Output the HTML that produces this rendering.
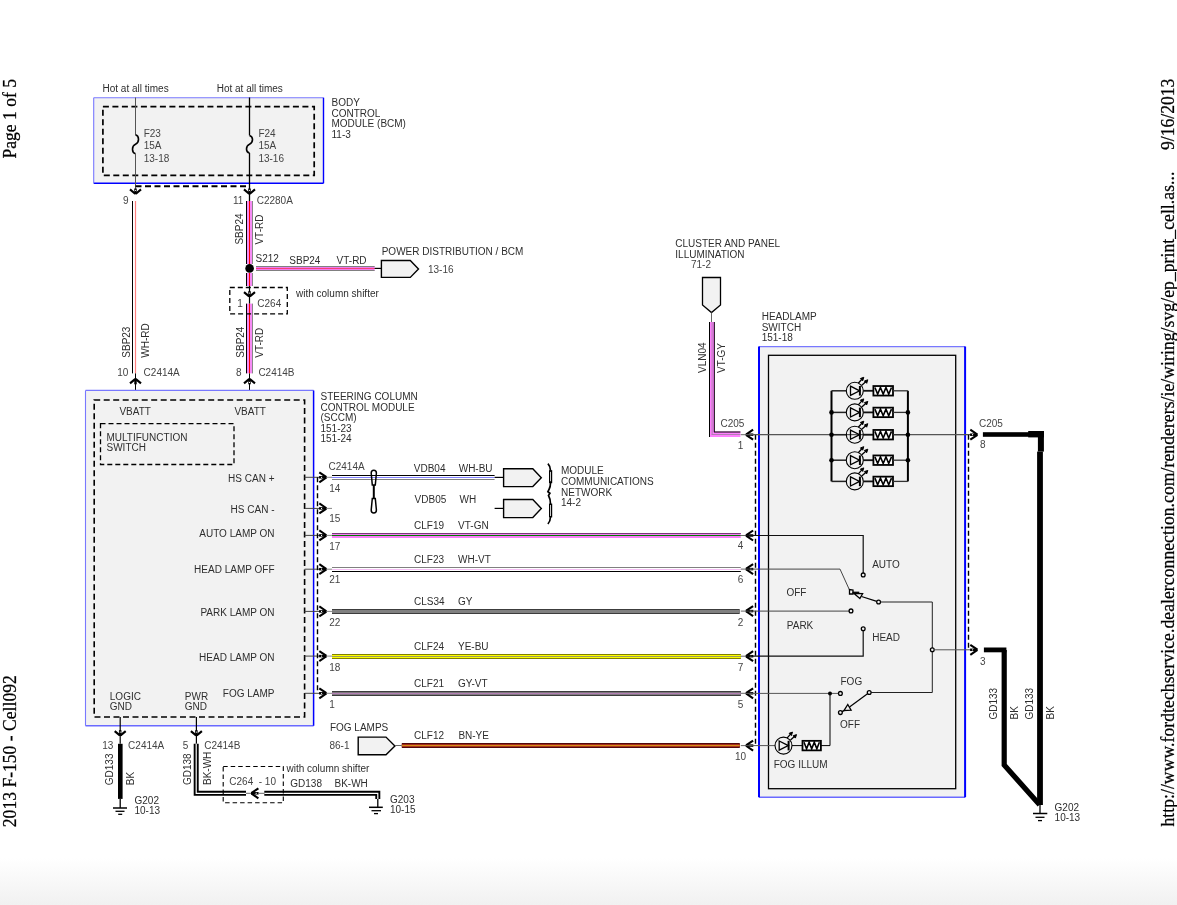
<!DOCTYPE html>
<html><head><meta charset="utf-8"><style>
html,body{margin:0;padding:0;background:#fff;width:1177px;height:905px;overflow:hidden}
svg{display:block;will-change:transform}

</style></head><body>
<svg width="1177" height="905" viewBox="0 0 1177 905">
<defs><linearGradient id="bg" x1="0" y1="0" x2="0" y2="1"><stop offset="0" stop-color="#ffffff"/><stop offset="1" stop-color="#f1f1f1"/></linearGradient></defs>
<rect x="0" y="858" width="1177" height="47" fill="url(#bg)" stroke="none" stroke-width="1"/>
<g font-family="'Liberation Serif', serif" font-size="17.6" fill="#000" stroke="#000" stroke-width="0.25">
<text transform="translate(16.1,158.6) rotate(-90) scale(1,1.07)">Page 1 of 5</text>
<text transform="translate(16.1,827.2) rotate(-90) scale(1,1.07)">2013 F-150 - Cell092</text>
<text transform="translate(1173.6,150) rotate(-90) scale(1,1.07)">9/16/2013</text>
<text transform="translate(1173.6,826.6) rotate(-90) scale(1,1.07)" textLength="655">http://www.fordtechservice.dealerconnection.com/renderers/ie/wiring/svg/ep_print_cell.as...</text>
</g>
<g font-family="'Liberation Sans', sans-serif" font-size="10">
<rect x="93.7" y="97.7" width="229.8" height="85.6" fill="#f2f2f2" stroke="none" stroke-width="1"/>
<line x1="93.7" y1="97.7" x2="323.5" y2="97.7" stroke="#7878ff" stroke-width="1.1"/>
<line x1="93.7" y1="183.3" x2="323.5" y2="183.3" stroke="#0000ff" stroke-width="1.4"/>
<line x1="93.7" y1="97.7" x2="93.7" y2="183.3" stroke="#7878ff" stroke-width="1.1"/>
<line x1="323.5" y1="97.7" x2="323.5" y2="183.3" stroke="#0000ff" stroke-width="1.4"/>
<rect x="102.9" y="106.6" width="211.3" height="68.8" fill="none" stroke="#000" stroke-width="1.7" stroke-dasharray="6 3.5"/>
<text x="102.5" y="92" fill="#2e2e2e">Hot at all times</text>
<text x="216.7" y="92" fill="#2e2e2e">Hot at all times</text>
<line x1="135.5" y1="97.5" x2="135.5" y2="134.8" stroke="#555" stroke-width="1"/>
<path d="M135.5,134.8 C139.5,136 139.5,142.5 135.5,144.3 C131.5,146 131.5,152.5 135.5,153.8" fill="none" stroke="#000" stroke-width="1.6"/>
<line x1="135.5" y1="153.8" x2="135.5" y2="194" stroke="#555" stroke-width="1"/>
<line x1="249.5" y1="97.5" x2="249.5" y2="135.4" stroke="#000" stroke-width="1.3"/>
<path d="M249.5,135.4 C253.5,136.5 253.5,142.5 249.5,144.2 C245.5,146 245.5,152 249.5,153" fill="none" stroke="#000" stroke-width="1.6"/>
<line x1="249.5" y1="153" x2="249.5" y2="201" stroke="#000" stroke-width="1.3"/>
<text x="143.7" y="136.9" fill="#444">F23</text>
<text x="143.7" y="149.25" fill="#444">15A</text>
<text x="143.7" y="161.6" fill="#444">13-18</text>
<text x="258.4" y="136.9" fill="#444">F24</text>
<text x="258.4" y="149.25" fill="#444">15A</text>
<text x="258.4" y="161.6" fill="#444">13-16</text>
<text x="331.5" y="106.3" fill="#2e2e2e">BODY</text>
<text x="331.5" y="116.8" fill="#2e2e2e">CONTROL</text>
<text x="331.5" y="127.3" fill="#2e2e2e">MODULE (BCM)</text>
<text x="331.5" y="137.8" fill="#2e2e2e">11-3</text>
<line x1="135.5" y1="186.2" x2="249.5" y2="186.2" stroke="#000" stroke-width="2" stroke-dasharray="6 3.5"/>
<path d="M141.0,189.4 L135.9,193.7 M130.0,189.4 L135.1,193.7" fill="none" stroke="#000" stroke-width="2.1"/>
<path d="M135.5,194.3 L135.5,188.5" fill="none" stroke="#000" stroke-width="2.5"/>
<circle cx="135.5" cy="190.36" r="0.6" fill="#fff"/>
<path d="M255.0,189.4 L249.9,193.7 M244.0,189.4 L249.1,193.7" fill="none" stroke="#000" stroke-width="2.1"/>
<path d="M249.5,194.3 L249.5,188.5" fill="none" stroke="#000" stroke-width="2.5"/>
<circle cx="249.5" cy="190.36" r="0.6" fill="#fff"/>
<text x="123" y="204" fill="#444">9</text>
<text x="233" y="204" fill="#444">11</text>
<text x="256.7" y="204" fill="#444">C2280A</text>
<line x1="132.5" y1="201" x2="132.5" y2="373.4" stroke="#000" stroke-width="1"/>
<line x1="135.5" y1="201" x2="135.5" y2="373.4" stroke="#ff8080" stroke-width="1.2"/>
<text transform="translate(129.5,357.7) rotate(-90)" fill="#2e2e2e">SBP23</text>
<text transform="translate(148.9,357.7) rotate(-90)" fill="#2e2e2e">WH-RD</text>
<text x="117.3" y="375.5" fill="#444">10</text>
<text x="143.6" y="375.5" fill="#444">C2414A</text>
<path d="M130.0,383.4 L135.1,379.1 M141.0,383.4 L135.9,379.1" fill="none" stroke="#000" stroke-width="2.1"/>
<path d="M135.5,378.5 L135.5,384.3" fill="none" stroke="#000" stroke-width="2.5"/>
<circle cx="135.5" cy="382.44" r="0.6" fill="#fff"/>
<line x1="135.5" y1="373.4" x2="135.5" y2="400" stroke="#000" stroke-width="1"/>
<rect x="246" y="201" width="1" height="63" fill="#000" stroke="none" stroke-width="1"/>
<rect x="247" y="201" width="2" height="63" fill="#f58cf5" stroke="none" stroke-width="1"/>
<rect x="249" y="201" width="1" height="63" fill="#ff0000" stroke="none" stroke-width="1"/>
<rect x="250" y="201" width="2" height="63" fill="#f58cf5" stroke="none" stroke-width="1"/>
<rect x="252" y="201" width="1" height="63" fill="#888" stroke="none" stroke-width="1"/>
<rect x="246" y="273" width="1" height="13" fill="#000" stroke="none" stroke-width="1"/>
<rect x="247" y="273" width="2" height="13" fill="#f58cf5" stroke="none" stroke-width="1"/>
<rect x="249" y="273" width="1" height="13" fill="#ff0000" stroke="none" stroke-width="1"/>
<rect x="250" y="273" width="2" height="13" fill="#f58cf5" stroke="none" stroke-width="1"/>
<rect x="252" y="273" width="1" height="13" fill="#888" stroke="none" stroke-width="1"/>
<rect x="246" y="303.6" width="1" height="69.8" fill="#000" stroke="none" stroke-width="1"/>
<rect x="247" y="303.6" width="2" height="69.8" fill="#f58cf5" stroke="none" stroke-width="1"/>
<rect x="249" y="303.6" width="1" height="69.8" fill="#ff0000" stroke="none" stroke-width="1"/>
<rect x="250" y="303.6" width="2" height="69.8" fill="#f58cf5" stroke="none" stroke-width="1"/>
<rect x="252" y="303.6" width="1" height="69.8" fill="#888" stroke="none" stroke-width="1"/>
<circle cx="249.6" cy="268.4" r="4.3" fill="#000"/>
<text transform="translate(242.6,244.6) rotate(-90)" fill="#2e2e2e">SBP24</text>
<text transform="translate(263.4,244.6) rotate(-90)" fill="#2e2e2e">VT-RD</text>
<text x="255.5" y="262.3" fill="#2e2e2e">S212</text>
<rect x="256" y="266" width="118.6" height="5" fill="#f07cf0" stroke="none" stroke-width="1"/>
<rect x="256" y="266" width="118.6" height="1" fill="#808080" stroke="none" stroke-width="1"/>
<rect x="256" y="268" width="118.6" height="1" fill="#f84078" stroke="none" stroke-width="1"/>
<rect x="256" y="270" width="118.6" height="1" fill="#808080" stroke="none" stroke-width="1"/>
<text x="289.3" y="264" fill="#2e2e2e">SBP24</text>
<text x="336.6" y="264" fill="#2e2e2e">VT-RD</text>
<line x1="374.6" y1="268.4" x2="381.4" y2="268.4" stroke="#000" stroke-width="1.2"/>
<path d="M381.4,260.5 L410.3,260.5 L418.5,268.95 L410.3,277.4 L381.4,277.4 Z" fill="#f2f2f2" stroke="#000" stroke-width="1.4"/>
<text x="381.7" y="254.7" fill="#2e2e2e">POWER DISTRIBUTION / BCM</text>
<text x="428" y="272.6" fill="#444">13-16</text>
<rect x="229.8" y="287.5" width="57.5" height="26.3" fill="none" stroke="#000" stroke-width="1.3" stroke-dasharray="5 3"/>
<line x1="249.5" y1="286" x2="249.5" y2="303.6" stroke="#000" stroke-width="1.2"/>
<path d="M255.0,292.1 L249.9,296.4 M244.0,292.1 L249.1,296.4" fill="none" stroke="#000" stroke-width="2.1"/>
<path d="M249.5,297 L249.5,291.2" fill="none" stroke="#000" stroke-width="2.5"/>
<circle cx="249.5" cy="293.06" r="0.6" fill="#fff"/>
<text x="237.3" y="307.3" fill="#444">1</text>
<text x="257.3" y="307.3" fill="#444">C264</text>
<text x="296" y="296.7" fill="#2e2e2e">with column shifter</text>
<text transform="translate(243.6,357.7) rotate(-90)" fill="#2e2e2e">SBP24</text>
<text transform="translate(263,357.7) rotate(-90)" fill="#2e2e2e">VT-RD</text>
<text x="236" y="375.5" fill="#444">8</text>
<text x="258.4" y="375.5" fill="#444">C2414B</text>
<line x1="249.5" y1="373.4" x2="249.5" y2="400" stroke="#000" stroke-width="1"/>
<path d="M244.0,383.4 L249.1,379.1 M255.0,383.4 L249.9,379.1" fill="none" stroke="#000" stroke-width="2.1"/>
<path d="M249.5,378.5 L249.5,384.3" fill="none" stroke="#000" stroke-width="2.5"/>
<circle cx="249.5" cy="382.44" r="0.6" fill="#fff"/>
<rect x="85.5" y="390.4" width="228.1" height="335.4" fill="#f2f2f2" stroke="none" stroke-width="1"/>
<line x1="85.5" y1="390.4" x2="313.6" y2="390.4" stroke="#7878ff" stroke-width="1.1"/>
<line x1="85.5" y1="725.8" x2="313.6" y2="725.8" stroke="#6a6aff" stroke-width="1.5"/>
<line x1="85.5" y1="390.4" x2="85.5" y2="725.8" stroke="#7878ff" stroke-width="1.1"/>
<line x1="313.6" y1="390.4" x2="313.6" y2="725.8" stroke="#0000ff" stroke-width="1.5"/>
<rect x="94.2" y="400" width="210.4" height="317" fill="none" stroke="#000" stroke-width="1.6" stroke-dasharray="6 3.5"/>
<text x="119.4" y="414.8" fill="#2e2e2e">VBATT</text>
<text x="234.4" y="414.8" fill="#2e2e2e">VBATT</text>
<rect x="100.5" y="423.7" width="133.5" height="40.8" fill="none" stroke="#000" stroke-width="1.3" stroke-dasharray="5 3"/>
<text x="106.5" y="440.7" fill="#2e2e2e">MULTIFUNCTION</text>
<text x="106.5" y="451.3" fill="#2e2e2e">SWITCH</text>
<text x="274.5" y="481.8" text-anchor="end" fill="#2e2e2e">HS CAN +</text>
<text x="274.5" y="512.5" text-anchor="end" fill="#2e2e2e">HS CAN -</text>
<text x="274.5" y="537" text-anchor="end" fill="#2e2e2e">AUTO LAMP ON</text>
<text x="274.5" y="572.7" text-anchor="end" fill="#2e2e2e">HEAD LAMP OFF</text>
<text x="274.5" y="615.5" text-anchor="end" fill="#2e2e2e">PARK LAMP ON</text>
<text x="274.5" y="660.6" text-anchor="end" fill="#2e2e2e">HEAD LAMP ON</text>
<text x="274.5" y="697.3" text-anchor="end" fill="#2e2e2e">FOG LAMP</text>
<text x="109.8" y="699.6" fill="#2e2e2e">LOGIC</text>
<text x="109.8" y="710.2" fill="#2e2e2e">GND</text>
<text x="184.8" y="699.6" fill="#2e2e2e">PWR</text>
<text x="184.8" y="710.2" fill="#2e2e2e">GND</text>
<text x="320.5" y="400.2" fill="#2e2e2e">STEERING COLUMN</text>
<text x="320.5" y="410.7" fill="#2e2e2e">CONTROL MODULE</text>
<text x="320.5" y="421.2" fill="#2e2e2e">(SCCM)</text>
<text x="320.5" y="431.7" fill="#2e2e2e">151-23</text>
<text x="320.5" y="442.2" fill="#2e2e2e">151-24</text>
<line x1="304.6" y1="477.3" x2="326" y2="477.3" stroke="#444" stroke-width="1"/>
<path d="M319.3,472.3 L326.1,476.9 M319.3,482.3 L326.1,477.7" fill="none" stroke="#000" stroke-width="2.1"/>
<path d="M326.7,477.3 L319.1,477.3" fill="none" stroke="#000" stroke-width="2.5"/>
<circle cx="321.53" cy="477.3" r="0.6" fill="#fff"/>
<line x1="326.7" y1="477.3" x2="332" y2="477.3" stroke="#888" stroke-width="1"/>
<text x="329.3" y="491.6" fill="#444">14</text>
<line x1="304.6" y1="508.4" x2="326" y2="508.4" stroke="#444" stroke-width="1"/>
<path d="M319.3,503.4 L326.1,508.0 M319.3,513.4 L326.1,508.8" fill="none" stroke="#000" stroke-width="2.1"/>
<path d="M326.7,508.4 L319.1,508.4" fill="none" stroke="#000" stroke-width="2.5"/>
<circle cx="321.53" cy="508.4" r="0.6" fill="#fff"/>
<line x1="326.7" y1="508.4" x2="332" y2="508.4" stroke="#888" stroke-width="1"/>
<text x="329.3" y="522" fill="#444">15</text>
<line x1="304.6" y1="535.4" x2="326" y2="535.4" stroke="#444" stroke-width="1"/>
<path d="M319.3,530.4 L326.1,535.0 M319.3,540.4 L326.1,535.8" fill="none" stroke="#000" stroke-width="2.1"/>
<path d="M326.7,535.4 L319.1,535.4" fill="none" stroke="#000" stroke-width="2.5"/>
<circle cx="321.53" cy="535.4" r="0.6" fill="#fff"/>
<line x1="326.7" y1="535.4" x2="332" y2="535.4" stroke="#888" stroke-width="1"/>
<text x="329.3" y="550" fill="#444">17</text>
<line x1="304.6" y1="569.2" x2="326" y2="569.2" stroke="#444" stroke-width="1"/>
<path d="M319.3,564.2 L326.1,568.8 M319.3,574.2 L326.1,569.6" fill="none" stroke="#000" stroke-width="2.1"/>
<path d="M326.7,569.2 L319.1,569.2" fill="none" stroke="#000" stroke-width="2.5"/>
<circle cx="321.53" cy="569.2" r="0.6" fill="#fff"/>
<line x1="326.7" y1="569.2" x2="332" y2="569.2" stroke="#888" stroke-width="1"/>
<text x="329.3" y="583.3" fill="#444">21</text>
<line x1="304.6" y1="611.4" x2="326" y2="611.4" stroke="#444" stroke-width="1"/>
<path d="M319.3,606.4 L326.1,611.0 M319.3,616.4 L326.1,611.8" fill="none" stroke="#000" stroke-width="2.1"/>
<path d="M326.7,611.4 L319.1,611.4" fill="none" stroke="#000" stroke-width="2.5"/>
<circle cx="321.53" cy="611.4" r="0.6" fill="#fff"/>
<line x1="326.7" y1="611.4" x2="332" y2="611.4" stroke="#888" stroke-width="1"/>
<text x="329.3" y="626" fill="#444">22</text>
<line x1="304.6" y1="656.1" x2="326" y2="656.1" stroke="#444" stroke-width="1"/>
<path d="M319.3,651.1 L326.1,655.7 M319.3,661.1 L326.1,656.5" fill="none" stroke="#000" stroke-width="2.1"/>
<path d="M326.7,656.1 L319.1,656.1" fill="none" stroke="#000" stroke-width="2.5"/>
<circle cx="321.53" cy="656.1" r="0.6" fill="#fff"/>
<line x1="326.7" y1="656.1" x2="332" y2="656.1" stroke="#888" stroke-width="1"/>
<text x="329.3" y="671.3" fill="#444">18</text>
<line x1="304.6" y1="693.3" x2="326" y2="693.3" stroke="#444" stroke-width="1"/>
<path d="M319.3,688.3 L326.1,692.9 M319.3,698.3 L326.1,693.7" fill="none" stroke="#000" stroke-width="2.1"/>
<path d="M326.7,693.3 L319.1,693.3" fill="none" stroke="#000" stroke-width="2.5"/>
<circle cx="321.53" cy="693.3" r="0.6" fill="#fff"/>
<line x1="326.7" y1="693.3" x2="332" y2="693.3" stroke="#888" stroke-width="1"/>
<text x="329.3" y="707.7" fill="#444">1</text>
<line x1="317.5" y1="477.3" x2="317.5" y2="693.3" stroke="#000" stroke-width="1.4" stroke-dasharray="5 3"/>
<text x="328.5" y="470" fill="#444">C2414A</text>
<rect x="332" y="475" width="162.6" height="1" fill="#000" stroke="none" stroke-width="1"/>
<rect x="332" y="477" width="162.6" height="1" fill="#8080ff" stroke="none" stroke-width="1"/>
<rect x="332" y="479" width="162.6" height="1" fill="#808080" stroke="none" stroke-width="1"/>
<line x1="494.6" y1="477.4" x2="503.6" y2="477.4" stroke="#000" stroke-width="1.2"/>
<line x1="494.6" y1="508.4" x2="503.6" y2="508.4" stroke="#000" stroke-width="1.2"/>
<path d="M503.6,468.7 L532.8,468.7 L541.3,477.65 L532.8,486.6 L503.6,486.6 Z" fill="#f2f2f2" stroke="#000" stroke-width="1.4"/>
<path d="M503.6,499.5 L532.8,499.5 L541.3,508.55 L532.8,517.6 L503.6,517.6 Z" fill="#f2f2f2" stroke="#000" stroke-width="1.4"/>
<text x="413.8" y="471.5" fill="#2e2e2e">VDB04</text>
<text x="458.7" y="471.5" fill="#2e2e2e">WH-BU</text>
<text x="414.6" y="502.8" fill="#2e2e2e">VDB05</text>
<text x="459.5" y="502.8" fill="#2e2e2e">WH</text>
<path d="M373.8,485 L373.8,498.5" fill="none" stroke="#000" stroke-width="2"/>
<path d="M371.2,473 Q371.2,470.2 373.8,470.2 Q376.4,470.2 376.4,473 L375.3,485 L372.3,485 Z" fill="none" stroke="#000" stroke-width="1.5"/>
<path d="M372.3,498.5 L375.3,498.5 L376.4,510 Q376.4,513 373.8,513 Q371.2,513 371.2,510 Z" fill="none" stroke="#000" stroke-width="1.5"/>
<path d="M547.9,463.6 Q550.3,466 550.5,470.5 L550.5,483 Q550.5,487 549,489.5 L547.9,491.8 L549.9,493.2 L548.5,495.5 Q550.5,499 550.5,504 L550.5,517 Q550.3,521.5 547.9,524" fill="none" stroke="#000" stroke-width="1.7"/>
<rect x="549.6" y="470.8" width="2" height="11.8" fill="#fff" stroke="#000" stroke-width="1.2"/>
<rect x="549.6" y="504.2" width="2" height="12.6" fill="#fff" stroke="#000" stroke-width="1.2"/>
<text x="561" y="474.4" fill="#2e2e2e">MODULE</text>
<text x="561" y="484.95" fill="#2e2e2e">COMMUNICATIONS</text>
<text x="561" y="495.5" fill="#2e2e2e">NETWORK</text>
<text x="561" y="506.05" fill="#2e2e2e">14-2</text>
<rect x="332" y="533" width="408.8" height="5" fill="#f880f8" stroke="none" stroke-width="1"/>
<rect x="332" y="533" width="408.8" height="1" fill="#783c78" stroke="none" stroke-width="1"/>
<rect x="332" y="535" width="408.8" height="1" fill="#008000" stroke="none" stroke-width="1"/>
<text x="414" y="529.3" fill="#2e2e2e">CLF19</text>
<text x="458.1" y="529.3" fill="#2e2e2e">VT-GN</text>
<rect x="332" y="567" width="408.8" height="1" fill="#808080" stroke="none" stroke-width="1"/>
<rect x="332" y="569" width="408.8" height="1" fill="#f5c0f5" stroke="none" stroke-width="1"/>
<rect x="332" y="571" width="408.8" height="1" fill="#000" stroke="none" stroke-width="1"/>
<text x="414" y="563.1" fill="#2e2e2e">CLF23</text>
<text x="458.1" y="563.1" fill="#2e2e2e">WH-VT</text>
<rect x="332" y="609" width="407.7" height="5" fill="#3c3c3c" stroke="none" stroke-width="1"/>
<rect x="332" y="610" width="407.7" height="3" fill="#808080" stroke="none" stroke-width="1"/>
<text x="414" y="605" fill="#2e2e2e">CLS34</text>
<text x="458" y="605" fill="#2e2e2e">GY</text>
<rect x="332" y="654" width="408.9" height="5" fill="#808000" stroke="none" stroke-width="1"/>
<rect x="332" y="655" width="408.9" height="3" fill="#ffff00" stroke="none" stroke-width="1"/>
<rect x="332" y="656.1" width="408.9" height="0.8" fill="#808080" stroke="none" stroke-width="1"/>
<text x="414" y="650" fill="#2e2e2e">CLF24</text>
<text x="458" y="650" fill="#2e2e2e">YE-BU</text>
<rect x="332" y="691" width="408.9" height="5" fill="#3c3c3c" stroke="none" stroke-width="1"/>
<rect x="332" y="692" width="408.9" height="3" fill="#787878" stroke="none" stroke-width="1"/>
<rect x="332" y="692.9" width="408.9" height="1.3" fill="#b480b4" stroke="none" stroke-width="1"/>
<text x="414" y="686.9" fill="#2e2e2e">CLF21</text>
<text x="458" y="686.9" fill="#2e2e2e">GY-VT</text>
<rect x="401.8" y="743" width="338.0" height="5" fill="#500a0a" stroke="none" stroke-width="1"/>
<rect x="401.8" y="744" width="338.0" height="3" fill="#a01e1e" stroke="none" stroke-width="1"/>
<rect x="401.8" y="744.9" width="338.0" height="1.3" fill="#d49018" stroke="none" stroke-width="1"/>
<text x="414" y="738.8" fill="#2e2e2e">CLF12</text>
<text x="458.4" y="738.8" fill="#2e2e2e">BN-YE</text>
<text x="329.9" y="730.6" fill="#2e2e2e">FOG LAMPS</text>
<text x="329.5" y="748.5" fill="#444">86-1</text>
<path d="M358.2,737.1 L386,737.1 L394.9,745.9000000000001 L386,754.7 L358.2,754.7 Z" fill="#f2f2f2" stroke="#000" stroke-width="1.4"/>
<line x1="394.9" y1="745.5" x2="401.8" y2="745.5" stroke="#666" stroke-width="1"/>
<text x="675.3" y="246.5" fill="#2e2e2e">CLUSTER AND PANEL</text>
<text x="675.3" y="257.5" fill="#2e2e2e">ILLUMINATION</text>
<text x="691" y="267.6" fill="#444">71-2</text>
<path d="M702.5,277.5 L720.5,277.5 L720.5,305 L711.5,312.6 L702.5,305 Z" fill="#f2f2f2" stroke="#000" stroke-width="1.3"/>
<line x1="711.5" y1="312.6" x2="711.5" y2="322" stroke="#666" stroke-width="1"/>
<rect x="709" y="322" width="5.5" height="115" fill="#ff80ff" stroke="none" stroke-width="1"/>
<rect x="709" y="431.5" width="31.4" height="5.5" fill="#ff80ff" stroke="none" stroke-width="1"/>
<rect x="711.6" y="322" width="1" height="112.8" fill="#b080b0" stroke="none" stroke-width="1"/>
<rect x="711.6" y="434" width="28.8" height="1" fill="#b080b0" stroke="none" stroke-width="1"/>
<line x1="709.5" y1="322" x2="709.5" y2="437" stroke="#000" stroke-width="1"/>
<line x1="714.3" y1="322" x2="714.3" y2="432.3" stroke="#000" stroke-width="1"/>
<line x1="714.3" y1="432" x2="740.4" y2="432" stroke="#000" stroke-width="1"/>
<text transform="translate(705.6,373) rotate(-90)" fill="#2e2e2e">VLN04</text>
<text transform="translate(725.4,373) rotate(-90)" fill="#2e2e2e">VT-GY</text>
<text x="720.5" y="427" fill="#444">C205</text>
<text x="761.7" y="320.3" fill="#2e2e2e">HEADLAMP</text>
<text x="761.7" y="330.7" fill="#2e2e2e">SWITCH</text>
<text x="761.7" y="341.1" fill="#2e2e2e">151-18</text>
<rect x="759" y="346.6" width="206.1" height="450.6" fill="#f2f2f2" stroke="none" stroke-width="1"/>
<line x1="759" y1="346.6" x2="965.1" y2="346.6" stroke="#7878ff" stroke-width="1.1"/>
<line x1="759" y1="797.2" x2="965.1" y2="797.2" stroke="#6a6aff" stroke-width="1.4"/>
<line x1="759" y1="346.6" x2="759" y2="797.2" stroke="#0000ff" stroke-width="2"/>
<line x1="965.1" y1="346.6" x2="965.1" y2="797.2" stroke="#0000ff" stroke-width="2"/>
<rect x="768.5" y="355.3" width="187.2" height="433.4" fill="none" stroke="#000" stroke-width="1.3"/>
<line x1="740.8" y1="434.7" x2="746" y2="434.7" stroke="#666" stroke-width="1"/>
<path d="M753.1,439.7 L746.3,435.1 M753.1,429.7 L746.3,434.3" fill="none" stroke="#000" stroke-width="2.1"/>
<path d="M745.7,434.7 L753.3,434.7" fill="none" stroke="#000" stroke-width="2.5"/>
<circle cx="750.87" cy="434.7" r="0.6" fill="#fff"/>
<text x="737.7" y="448.7" fill="#444">1</text>
<line x1="740.8" y1="535.5" x2="746" y2="535.5" stroke="#666" stroke-width="1"/>
<path d="M753.1,540.5 L746.3,535.9 M753.1,530.5 L746.3,535.1" fill="none" stroke="#000" stroke-width="2.1"/>
<path d="M745.7,535.5 L753.3,535.5" fill="none" stroke="#000" stroke-width="2.5"/>
<circle cx="750.87" cy="535.5" r="0.6" fill="#fff"/>
<text x="737.7" y="549.2" fill="#444">4</text>
<line x1="740.8" y1="569.1" x2="746" y2="569.1" stroke="#666" stroke-width="1"/>
<path d="M753.1,574.1 L746.3,569.5 M753.1,564.1 L746.3,568.7" fill="none" stroke="#000" stroke-width="2.1"/>
<path d="M745.7,569.1 L753.3,569.1" fill="none" stroke="#000" stroke-width="2.5"/>
<circle cx="750.87" cy="569.1" r="0.6" fill="#fff"/>
<text x="737.7" y="583.3" fill="#444">6</text>
<line x1="740.8" y1="611.1" x2="746" y2="611.1" stroke="#666" stroke-width="1"/>
<path d="M753.1,616.1 L746.3,611.5 M753.1,606.1 L746.3,610.7" fill="none" stroke="#000" stroke-width="2.1"/>
<path d="M745.7,611.1 L753.3,611.1" fill="none" stroke="#000" stroke-width="2.5"/>
<circle cx="750.87" cy="611.1" r="0.6" fill="#fff"/>
<text x="737.7" y="625.6" fill="#444">2</text>
<line x1="740.8" y1="656.2" x2="746" y2="656.2" stroke="#666" stroke-width="1"/>
<path d="M753.1,661.2 L746.3,656.6 M753.1,651.2 L746.3,655.8" fill="none" stroke="#000" stroke-width="2.1"/>
<path d="M745.7,656.2 L753.3,656.2" fill="none" stroke="#000" stroke-width="2.5"/>
<circle cx="750.87" cy="656.2" r="0.6" fill="#fff"/>
<text x="737.7" y="671" fill="#444">7</text>
<line x1="740.8" y1="693.3" x2="746" y2="693.3" stroke="#666" stroke-width="1"/>
<path d="M753.1,698.3 L746.3,693.7 M753.1,688.3 L746.3,692.9" fill="none" stroke="#000" stroke-width="2.1"/>
<path d="M745.7,693.3 L753.3,693.3" fill="none" stroke="#000" stroke-width="2.5"/>
<circle cx="750.87" cy="693.3" r="0.6" fill="#fff"/>
<text x="737.7" y="708" fill="#444">5</text>
<line x1="740.8" y1="745.6" x2="746" y2="745.6" stroke="#666" stroke-width="1"/>
<path d="M753.1,750.6 L746.3,746.0 M753.1,740.6 L746.3,745.2" fill="none" stroke="#000" stroke-width="2.1"/>
<path d="M745.7,745.6 L753.3,745.6" fill="none" stroke="#000" stroke-width="2.5"/>
<circle cx="750.87" cy="745.6" r="0.6" fill="#fff"/>
<text x="735" y="760" fill="#444">10</text>
<line x1="755.5" y1="434.7" x2="755.5" y2="745.6" stroke="#000" stroke-width="1.4" stroke-dasharray="5 3"/>
<line x1="746" y1="434.7" x2="977" y2="434.7" stroke="#555" stroke-width="1.2"/>
<line x1="831.5" y1="390.8" x2="831.5" y2="481.4" stroke="#000" stroke-width="2"/>
<line x1="907.9" y1="390.8" x2="907.9" y2="481.4" stroke="#000" stroke-width="2"/>
<line x1="831.5" y1="390.8" x2="846.3" y2="390.8" stroke="#222" stroke-width="1.5"/>
<circle cx="854.8" cy="390.8" r="8.5" fill="none" stroke="#000" stroke-width="1.1"/>
<path d="M850.5,386.2 L859.5999999999999,390.8 L850.5,395.40000000000003 Z" fill="none" stroke="#000" stroke-width="1.3"/>
<line x1="859.9" y1="386.0" x2="859.9" y2="395.6" stroke="#000" stroke-width="2"/>
<path d="M858.3,383.3 L862.3,378.8 M861.8,385.3 L866.3,381.3" fill="none" stroke="#000" stroke-width="1.3"/>
<path d="M863.8,377.3 l-3.4,1.2 l2.3,2.3 Z M867.8,379.8 l-3.4,1.2 l2.3,2.3 Z" fill="#000" stroke="#000" stroke-width="1"/>
<line x1="863.3" y1="390.8" x2="873.4" y2="390.8" stroke="#111" stroke-width="1.8"/>
<rect x="873.4" y="386.05" width="19.6" height="9.5" fill="#fff" stroke="#000" stroke-width="1.8"/>
<path d="M874.9,387.5 L877.6666666666666,394.1 L880.4333333333333,387.5 L883.1999999999999,394.1 L885.9666666666666,387.5 L888.7333333333333,394.1 L891.5,387.5" fill="none" stroke="#000" stroke-width="1.6"/>
<line x1="893" y1="390.8" x2="907.9" y2="390.8" stroke="#333" stroke-width="1.3"/>
<line x1="831.5" y1="412.4" x2="846.3" y2="412.4" stroke="#222" stroke-width="1.5"/>
<circle cx="854.8" cy="412.4" r="8.5" fill="none" stroke="#000" stroke-width="1.1"/>
<path d="M850.5,407.79999999999995 L859.5999999999999,412.4 L850.5,417.0 Z" fill="none" stroke="#000" stroke-width="1.3"/>
<line x1="859.9" y1="407.59999999999997" x2="859.9" y2="417.2" stroke="#000" stroke-width="2"/>
<path d="M858.3,404.9 L862.3,400.4 M861.8,406.9 L866.3,402.9" fill="none" stroke="#000" stroke-width="1.3"/>
<path d="M863.8,398.9 l-3.4,1.2 l2.3,2.3 Z M867.8,401.4 l-3.4,1.2 l2.3,2.3 Z" fill="#000" stroke="#000" stroke-width="1"/>
<line x1="863.3" y1="412.4" x2="873.4" y2="412.4" stroke="#111" stroke-width="1.8"/>
<rect x="873.4" y="407.65" width="19.6" height="9.5" fill="#fff" stroke="#000" stroke-width="1.8"/>
<path d="M874.9,409.09999999999997 L877.6666666666666,415.7 L880.4333333333333,409.09999999999997 L883.1999999999999,415.7 L885.9666666666666,409.09999999999997 L888.7333333333333,415.7 L891.5,409.09999999999997" fill="none" stroke="#000" stroke-width="1.6"/>
<line x1="893" y1="412.4" x2="907.9" y2="412.4" stroke="#333" stroke-width="1.3"/>
<line x1="831.5" y1="434.7" x2="846.3" y2="434.7" stroke="#222" stroke-width="1.5"/>
<circle cx="854.8" cy="434.7" r="8.5" fill="none" stroke="#000" stroke-width="1.1"/>
<path d="M850.5,430.09999999999997 L859.5999999999999,434.7 L850.5,439.3 Z" fill="none" stroke="#000" stroke-width="1.3"/>
<line x1="859.9" y1="429.9" x2="859.9" y2="439.5" stroke="#000" stroke-width="2"/>
<path d="M858.3,427.2 L862.3,422.7 M861.8,429.2 L866.3,425.2" fill="none" stroke="#000" stroke-width="1.3"/>
<path d="M863.8,421.2 l-3.4,1.2 l2.3,2.3 Z M867.8,423.7 l-3.4,1.2 l2.3,2.3 Z" fill="#000" stroke="#000" stroke-width="1"/>
<line x1="863.3" y1="434.7" x2="873.4" y2="434.7" stroke="#111" stroke-width="1.8"/>
<rect x="873.4" y="429.95" width="19.6" height="9.5" fill="#fff" stroke="#000" stroke-width="1.8"/>
<path d="M874.9,431.4 L877.6666666666666,438.0 L880.4333333333333,431.4 L883.1999999999999,438.0 L885.9666666666666,431.4 L888.7333333333333,438.0 L891.5,431.4" fill="none" stroke="#000" stroke-width="1.6"/>
<line x1="893" y1="434.7" x2="907.9" y2="434.7" stroke="#333" stroke-width="1.3"/>
<line x1="831.5" y1="460.2" x2="846.3" y2="460.2" stroke="#222" stroke-width="1.5"/>
<circle cx="854.8" cy="460.2" r="8.5" fill="none" stroke="#000" stroke-width="1.1"/>
<path d="M850.5,455.59999999999997 L859.5999999999999,460.2 L850.5,464.8 Z" fill="none" stroke="#000" stroke-width="1.3"/>
<line x1="859.9" y1="455.4" x2="859.9" y2="465.0" stroke="#000" stroke-width="2"/>
<path d="M858.3,452.7 L862.3,448.2 M861.8,454.7 L866.3,450.7" fill="none" stroke="#000" stroke-width="1.3"/>
<path d="M863.8,446.7 l-3.4,1.2 l2.3,2.3 Z M867.8,449.2 l-3.4,1.2 l2.3,2.3 Z" fill="#000" stroke="#000" stroke-width="1"/>
<line x1="863.3" y1="460.2" x2="873.4" y2="460.2" stroke="#111" stroke-width="1.8"/>
<rect x="873.4" y="455.45" width="19.6" height="9.5" fill="#fff" stroke="#000" stroke-width="1.8"/>
<path d="M874.9,456.9 L877.6666666666666,463.5 L880.4333333333333,456.9 L883.1999999999999,463.5 L885.9666666666666,456.9 L888.7333333333333,463.5 L891.5,456.9" fill="none" stroke="#000" stroke-width="1.6"/>
<line x1="893" y1="460.2" x2="907.9" y2="460.2" stroke="#333" stroke-width="1.3"/>
<line x1="831.5" y1="481.4" x2="846.3" y2="481.4" stroke="#222" stroke-width="1.5"/>
<circle cx="854.8" cy="481.4" r="8.5" fill="none" stroke="#000" stroke-width="1.1"/>
<path d="M850.5,476.79999999999995 L859.5999999999999,481.4 L850.5,486.0 Z" fill="none" stroke="#000" stroke-width="1.3"/>
<line x1="859.9" y1="476.59999999999997" x2="859.9" y2="486.2" stroke="#000" stroke-width="2"/>
<path d="M858.3,473.9 L862.3,469.4 M861.8,475.9 L866.3,471.9" fill="none" stroke="#000" stroke-width="1.3"/>
<path d="M863.8,467.9 l-3.4,1.2 l2.3,2.3 Z M867.8,470.4 l-3.4,1.2 l2.3,2.3 Z" fill="#000" stroke="#000" stroke-width="1"/>
<line x1="863.3" y1="481.4" x2="873.4" y2="481.4" stroke="#111" stroke-width="1.8"/>
<rect x="873.4" y="476.65" width="19.6" height="9.5" fill="#fff" stroke="#000" stroke-width="1.8"/>
<path d="M874.9,478.09999999999997 L877.6666666666666,484.7 L880.4333333333333,478.09999999999997 L883.1999999999999,484.7 L885.9666666666666,478.09999999999997 L888.7333333333333,484.7 L891.5,478.09999999999997" fill="none" stroke="#000" stroke-width="1.6"/>
<line x1="893" y1="481.4" x2="907.9" y2="481.4" stroke="#333" stroke-width="1.3"/>
<circle cx="831.5" cy="412.4" r="2.3" fill="#000"/>
<circle cx="907.9" cy="412.4" r="2.3" fill="#000"/>
<circle cx="831.5" cy="434.7" r="2.3" fill="#000"/>
<circle cx="907.9" cy="434.7" r="2.3" fill="#000"/>
<circle cx="831.5" cy="460.2" r="2.3" fill="#000"/>
<circle cx="907.9" cy="460.2" r="2.3" fill="#000"/>
<path d="M970.3,429.7 L977.1,434.3 M970.3,439.7 L977.1,435.1" fill="none" stroke="#000" stroke-width="2.1"/>
<path d="M977.7,434.7 L970.1,434.7" fill="none" stroke="#000" stroke-width="2.5"/>
<circle cx="972.53" cy="434.7" r="0.6" fill="#fff"/>
<text x="979" y="427.3" fill="#444">C205</text>
<text x="980" y="448.3" fill="#444">8</text>
<rect x="982.9" y="432.2" width="50" height="4.6" fill="#000" stroke="none" stroke-width="1"/>
<rect x="1028.2" y="431" width="15.7" height="6.4" fill="#000" stroke="none" stroke-width="1"/>
<rect x="1037.9" y="431" width="6" height="20.6" fill="#000" stroke="none" stroke-width="1"/>
<rect x="1037.1" y="451.6" width="5.8" height="353.4" fill="#000" stroke="none" stroke-width="1"/>
<line x1="968.5" y1="434.7" x2="968.5" y2="649.8" stroke="#000" stroke-width="1.4" stroke-dasharray="5 3"/>
<path d="M746,535.5 L863.2,535.5 L863.2,573" fill="none" stroke="#111" stroke-width="1.2" stroke-linejoin="miter"/>
<circle cx="863.2" cy="574.9" r="1.9" fill="#f2f2f2" stroke="#000" stroke-width="1.3"/>
<text x="872.2" y="567.5" fill="#2e2e2e">AUTO</text>
<path d="M746,569.1 L840,569.1 L849.5,590" fill="none" stroke="#444" stroke-width="1.0" stroke-linejoin="miter"/>
<path d="M849.5,589.5 L849.5,594 L853,594 L853,590 Z" fill="none" stroke="#000" stroke-width="1.3"/>
<line x1="852.5" y1="592.3" x2="859.3" y2="592.3" stroke="#000" stroke-width="1.3"/>
<path d="M854,593.5 L862.6,593.7 L859.9,598.4 Z" fill="#f2f2f2" stroke="#000" stroke-width="1.3"/>
<path d="M861.5,596.5 L876.8,601.4" fill="none" stroke="#000" stroke-width="1.3"/>
<circle cx="878.6" cy="602" r="1.9" fill="#f2f2f2" stroke="#000" stroke-width="1.3"/>
<text x="786.4" y="595.6" fill="#2e2e2e">OFF</text>
<path d="M746,611.1 L849,611.1" fill="none" stroke="#444" stroke-width="1.0" stroke-linejoin="miter"/>
<circle cx="851" cy="610.9" r="1.9" fill="#f2f2f2" stroke="#000" stroke-width="1.3"/>
<text x="786.8" y="628.8" fill="#2e2e2e">PARK</text>
<circle cx="863.2" cy="628.8" r="1.9" fill="#f2f2f2" stroke="#000" stroke-width="1.3"/>
<path d="M863.2,630.7 L863.2,656.2 L746,656.2" fill="none" stroke="#111" stroke-width="1.2" stroke-linejoin="miter"/>
<text x="872.2" y="640.9" fill="#2e2e2e">HEAD</text>
<path d="M880.5,602 L932.3,602 L932.3,692.5 L871.1,692.5" fill="none" stroke="#222" stroke-width="1.0" stroke-linejoin="miter"/>
<circle cx="932.3" cy="649.8" r="1.9" fill="#f2f2f2" stroke="#000" stroke-width="1.3"/>
<line x1="934.2" y1="649.8" x2="977" y2="649.8" stroke="#555" stroke-width="1.0"/>
<path d="M970.3,644.8 L977.1,649.4 M970.3,654.8 L977.1,650.2" fill="none" stroke="#000" stroke-width="2.1"/>
<path d="M977.7,649.8 L970.1,649.8" fill="none" stroke="#000" stroke-width="2.5"/>
<circle cx="972.53" cy="649.8" r="0.6" fill="#fff"/>
<text x="980" y="664.8" fill="#444">3</text>
<path d="M746,693.4 L838.5,693.4" fill="none" stroke="#555" stroke-width="1.0" stroke-linejoin="miter"/>
<circle cx="830" cy="693.4" r="2" fill="#000"/>
<circle cx="840.4" cy="693.4" r="1.9" fill="#f2f2f2" stroke="#000" stroke-width="1.3"/>
<text x="840.5" y="685.4" fill="#2e2e2e">FOG</text>
<circle cx="869.2" cy="692.5" r="1.9" fill="#f2f2f2" stroke="#000" stroke-width="1.3"/>
<circle cx="840.4" cy="712.6" r="1.9" fill="#f2f2f2" stroke="#000" stroke-width="1.3"/>
<path d="M867.5,693.7 L849.5,707" fill="none" stroke="#000" stroke-width="1.2"/>
<path d="M847.8,704.5 L851.1,710.1 L844,710.6 Z" fill="#f2f2f2" stroke="#000" stroke-width="1.3"/>
<line x1="844.5" y1="710.3" x2="841.8" y2="711.6" stroke="#000" stroke-width="1.3"/>
<text x="840.1" y="728.1" fill="#2e2e2e">OFF</text>
<path d="M830,693.3 L830,745.6 L820.9,745.6" fill="none" stroke="#000" stroke-width="1.0" stroke-linejoin="miter"/>
<line x1="746" y1="745.6" x2="775" y2="745.6" stroke="#555" stroke-width="1.0"/>
<circle cx="783.5" cy="745.6" r="8.5" fill="none" stroke="#000" stroke-width="1.1"/>
<path d="M779.2,741.0 L788.3,745.6 L779.2,750.2 Z" fill="none" stroke="#000" stroke-width="1.3"/>
<line x1="788.6" y1="740.8000000000001" x2="788.6" y2="750.4" stroke="#000" stroke-width="2"/>
<path d="M787.0,738.1 L791.0,733.6 M790.5,740.1 L795.0,736.1" fill="none" stroke="#000" stroke-width="1.3"/>
<path d="M792.5,732.1 l-3.4,1.2 l2.3,2.3 Z M796.5,734.6 l-3.4,1.2 l2.3,2.3 Z" fill="#000" stroke="#000" stroke-width="1"/>
<line x1="792" y1="745.6" x2="802.5" y2="745.6" stroke="#000" stroke-width="1.0"/>
<rect x="802.5" y="740.85" width="18.4" height="9.5" fill="#fff" stroke="#000" stroke-width="1.8"/>
<path d="M804.0,742.3000000000001 L806.5666666666666,748.9 L809.1333333333333,742.3000000000001 L811.7,748.9 L814.2666666666667,742.3000000000001 L816.8333333333333,748.9 L819.4,742.3000000000001" fill="none" stroke="#000" stroke-width="1.6"/>
<text x="773.7" y="767.9" fill="#2e2e2e">FOG ILLUM</text>
<rect x="983.9" y="647.5" width="22.5" height="4.8" fill="#000" stroke="none" stroke-width="1"/>
<path d="M1004.2,650 L1004.2,765 L1039.6,804.7" fill="none" stroke="#000" stroke-width="5.2" stroke-linejoin="miter"/>
<text transform="translate(996.8,719.5) rotate(-90)" fill="#2e2e2e">GD133</text>
<text transform="translate(1017.8,719.5) rotate(-90)" fill="#2e2e2e">BK</text>
<text transform="translate(1032.8,719.5) rotate(-90)" fill="#2e2e2e">GD133</text>
<text transform="translate(1053.8,719.5) rotate(-90)" fill="#2e2e2e">BK</text>
<line x1="1040" y1="805" x2="1040" y2="813.5" stroke="#000" stroke-width="1.3"/>
<line x1="1033" y1="813.5" x2="1047.3" y2="813.5" stroke="#000" stroke-width="1.5"/>
<line x1="1035.5" y1="817.3" x2="1044.5" y2="817.3" stroke="#000" stroke-width="1.3"/>
<line x1="1038" y1="820.6" x2="1042" y2="820.6" stroke="#000" stroke-width="1.3"/>
<text x="1054.6" y="811.3" fill="#2e2e2e">G202</text>
<text x="1054.6" y="821.2" fill="#2e2e2e">10-13</text>
<line x1="120.2" y1="717" x2="120.2" y2="743.8" stroke="#000" stroke-width="1.2"/>
<path d="M125.7,731.1 L120.6,735.4 M114.7,731.1 L119.8,735.4" fill="none" stroke="#000" stroke-width="2.1"/>
<path d="M120.2,736 L120.2,730.2" fill="none" stroke="#000" stroke-width="2.5"/>
<circle cx="120.2" cy="732.06" r="0.6" fill="#fff"/>
<text x="102.2" y="748.5" fill="#444">13</text>
<text x="128.1" y="748.5" fill="#444">C2414A</text>
<rect x="118" y="743.8" width="4.6" height="55.1" fill="#000" stroke="none" stroke-width="1"/>
<line x1="120.2" y1="799" x2="120.2" y2="808" stroke="#000" stroke-width="1.3"/>
<line x1="113" y1="808" x2="127" y2="808" stroke="#000" stroke-width="1.5"/>
<line x1="115.5" y1="811.3" x2="124.5" y2="811.3" stroke="#000" stroke-width="1.3"/>
<line x1="118.2" y1="814.3" x2="122.2" y2="814.3" stroke="#000" stroke-width="1.3"/>
<text transform="translate(113,785.2) rotate(-90)" fill="#2e2e2e">GD133</text>
<text transform="translate(134.4,785.2) rotate(-90)" fill="#2e2e2e">BK</text>
<text x="134.5" y="803.6" fill="#2e2e2e">G202</text>
<text x="134.5" y="813.8" fill="#2e2e2e">10-13</text>
<line x1="196.4" y1="717" x2="196.4" y2="743.8" stroke="#000" stroke-width="1.2"/>
<path d="M201.9,731.1 L196.8,735.4 M190.9,731.1 L196.0,735.4" fill="none" stroke="#000" stroke-width="2.1"/>
<path d="M196.4,736 L196.4,730.2" fill="none" stroke="#000" stroke-width="2.5"/>
<circle cx="196.4" cy="732.06" r="0.6" fill="#fff"/>
<text x="182.8" y="748.5" fill="#444">5</text>
<text x="204.2" y="748.5" fill="#444">C2414B</text>
<path d="M196.2,743.8 L196.2,793.3 L246,793.3" fill="none" stroke="#000" stroke-width="5" stroke-linejoin="miter"/>
<path d="M196.2,743.8 L196.2,793.3 L246,793.3" fill="none" stroke="#fff" stroke-width="1.2" stroke-linejoin="miter"/>
<line x1="246" y1="793.3" x2="252" y2="793.3" stroke="#666" stroke-width="1"/>
<path d="M258.4,798.3 L251.6,793.7 M258.4,788.3 L251.6,792.9" fill="none" stroke="#000" stroke-width="2.1"/>
<path d="M251,793.3 L258.6,793.3" fill="none" stroke="#000" stroke-width="2.5"/>
<circle cx="256.17" cy="793.3" r="0.6" fill="#fff"/>
<path d="M264.3,793.3 L377.8,793.3 L377.8,798.9" fill="none" stroke="#000" stroke-width="5" stroke-linejoin="miter"/>
<path d="M264.3,793.3 L377.8,793.3 L377.8,798.9" fill="none" stroke="#fff" stroke-width="1.2" stroke-linejoin="miter"/>
<line x1="258" y1="793.3" x2="264.3" y2="793.3" stroke="#666" stroke-width="1"/>
<text transform="translate(190.5,785) rotate(-90)" fill="#2e2e2e">GD138</text>
<text transform="translate(210.9,785) rotate(-90)" fill="#2e2e2e">BK-WH</text>
<rect x="223.2" y="766.5" width="60.1" height="36.2" fill="none" stroke="#000" stroke-width="1.1" stroke-dasharray="4.5 3"/>
<text x="229.3" y="785.2" fill="#444" xml:space="preserve">C264  - 10</text>
<text x="286.5" y="772.2" fill="#2e2e2e">with column shifter</text>
<text x="290.3" y="787" fill="#2e2e2e">GD138</text>
<text x="334.5" y="787" fill="#2e2e2e">BK-WH</text>
<line x1="377.8" y1="798.9" x2="377.8" y2="807.3" stroke="#000" stroke-width="1.3"/>
<line x1="369" y1="807.3" x2="382.8" y2="807.3" stroke="#000" stroke-width="1.5"/>
<line x1="371.5" y1="810.7" x2="381" y2="810.7" stroke="#000" stroke-width="1.3"/>
<line x1="374" y1="813.6" x2="378" y2="813.6" stroke="#000" stroke-width="1.3"/>
<text x="390" y="803" fill="#2e2e2e">G203</text>
<text x="390" y="813.1" fill="#2e2e2e">10-15</text>
</g>
</svg>
</body></html>
